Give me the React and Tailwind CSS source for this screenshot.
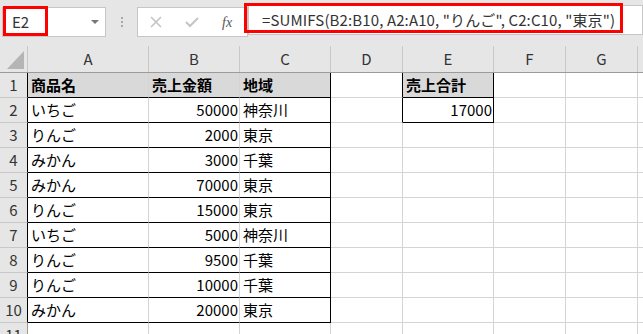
const cols = [
  { key: "A", w: "w-[121px]" },
  { key: "B", w: "w-[91px]" },
  { key: "C", w: "w-[91px]" },
  { key: "D", w: "w-[72px]" },
  { key: "E", w: "w-[91px]" },
  { key: "F", w: "w-[72px]" },
  { key: "G", w: "w-[72px]" },
];

const data = [
  ["いちご", "50000", "神奈川"],
  ["りんご", "2000", "東京"],
  ["みかん", "3000", "千葉"],
  ["みかん", "70000", "東京"],
  ["りんご", "15000", "東京"],
  ["いちご", "5000", "神奈川"],
  ["りんご", "9500", "千葉"],
  ["りんご", "10000", "千葉"],
  ["みかん", "20000", "東京"],
];

function Cell({ w, right, bottom, bg, bold, align, children }) {
  return (
    <div
      className={`${w} shrink-0 h-full border-r border-b ${right ? "border-r-black" : "border-r-[#d4d4d4]"} ${bottom ? "border-b-black" : "border-b-[#d4d4d4]"} ${bg ? "bg-[#d9d9d9]" : "bg-white"} ${bold ? "font-bold" : ""} ${align === "right" ? "justify-end pr-[1px]" : "pl-[3px]"} flex items-center text-[15px] text-black overflow-hidden whitespace-nowrap`}
    >
      {children}
    </div>
  );
}

function RowHead({ n, black }) {
  return (
    <div
      className={`w-[28px] shrink-0 h-full bg-[#e6e6e6] border-r border-b border-b-[#c8c8c8] ${black ? "border-r-black" : "border-r-[#9b9b9b]"} flex items-center justify-center text-[15px] text-[#333]`}
    >
      {n}
    </div>
  );
}

export default function App() {
  const rows = [];
  for (let r = 1; r <= 11; r++) {
    const inTable = r <= 10;
    const d = r >= 2 && r <= 10 ? data[r - 2] : null;
    rows.push(
      <div key={r} className="flex h-[25px]">
        <RowHead n={r} black={inTable} />
        <Cell w="w-[121px]" bottom={inTable} bg={r === 1} bold={r === 1}>
          {r === 1 ? "商品名" : d ? d[0] : ""}
        </Cell>
        <Cell w="w-[91px]" bottom={inTable} bg={r === 1} bold={r === 1} align={r === 1 ? "left" : "right"}>
          {r === 1 ? "売上金額" : d ? d[1] : ""}
        </Cell>
        <Cell w="w-[91px]" right={inTable} bottom={inTable} bg={r === 1} bold={r === 1}>
          {r === 1 ? "地域" : d ? d[2] : ""}
        </Cell>
        <Cell w="w-[72px]" right={r <= 2}></Cell>
        <Cell w="w-[91px]" right={r <= 2} bottom={r <= 2} bg={r === 1} bold={r === 1} align={r === 2 ? "right" : "left"}>
          {r === 1 ? "売上合計" : r === 2 ? "17000" : ""}
        </Cell>
        <Cell w="w-[72px]"></Cell>
        <Cell w="w-[72px]"></Cell>
        <Cell w="w-[72px]"></Cell>
      </div>
    );
  }

  return (
    <div
      className="w-[643px] h-[334px] overflow-hidden bg-white relative"
      style={{ fontFamily: '"Noto Sans CJK JP", "Liberation Sans", sans-serif' }}
    >
      {/* toolbar */}
      <div className="h-[46px] bg-[#e6e6e6] flex items-start pt-[7px] pl-[2px]">
        <div className="w-[104px] h-[30px] bg-white border border-[#c6c6c6] flex items-center justify-between pl-[9px] pr-[6px]">
          <span className="text-[15px] text-[#333]">E2</span>
          <span className="w-0 h-0 border-l-[4px] border-r-[4px] border-t-[4px] border-l-transparent border-r-transparent border-t-[#777]"></span>
        </div>
        <div className="w-[31px] h-[30px] flex flex-col items-center justify-center gap-[2px]">
          <span className="w-[2px] h-[2px] bg-[#a8a8a8]"></span>
          <span className="w-[2px] h-[2px] bg-[#a8a8a8]"></span>
          <span className="w-[2px] h-[2px] bg-[#a8a8a8]"></span>
        </div>
        <div className="w-[111px] h-[30px] bg-white border border-[#c6c6c6] flex items-center">
          <svg width="12" height="12" viewBox="0 0 12 12" className="ml-[12px]">
            <path d="M1 1 L11 11 M11 1 L1 11" stroke="#c4c4c4" strokeWidth="1.6" />
          </svg>
          <svg width="14" height="12" viewBox="0 0 14 12" className="ml-[23px]">
            <path d="M1 6 L5 10 L13 2" stroke="#c4c4c4" strokeWidth="2" fill="none" />
          </svg>
          <span className="ml-[23px] text-[14px] italic text-[#555]" style={{ fontFamily: '"Liberation Serif", serif' }}>
            fx
          </span>
        </div>
        <div className="flex-1 h-[30px] bg-white border border-[#c6c6c6] flex items-center pl-[13px] -mt-[2px] pt-[1px]">
          <span className="text-[15px] text-[#333] whitespace-nowrap tracking-[0.12px]">
            =SUMIFS(B2:B10, A2:A10, "りんご", C2:C10, "東京")
          </span>
        </div>
      </div>

      {/* column headers */}
      <div className="flex h-[27px] bg-[#e6e6e6] border-b border-[#9b9b9b]">
        <div className="w-[28px] shrink-0 h-full border-r border-[#c8c8c8] flex items-end justify-end pb-[3px] pr-[3px]">
          <svg width="17" height="18" viewBox="0 0 17 18">
            <path d="M17 0 L17 18 L0 18 Z" fill="#b5b5b5" />
          </svg>
        </div>
        {cols.map((c) => (
          <div
            key={c.key}
            className={`${c.w} shrink-0 h-full border-r border-[#c8c8c8] flex items-center justify-center text-[15px] text-[#333]`}
          >
            {c.key}
          </div>
        ))}
        <div className="flex-1"></div>
      </div>

      {rows}

      {/* red annotations */}
      <div className="absolute left-[3px] top-[6px] w-[45px] h-[30px] border-[3px] border-[#ff0000]"></div>
      <div className="absolute left-[244px] top-[3px] w-[379px] h-[30px] border-[3px] border-[#ff0000]"></div>
    </div>
  );
}
